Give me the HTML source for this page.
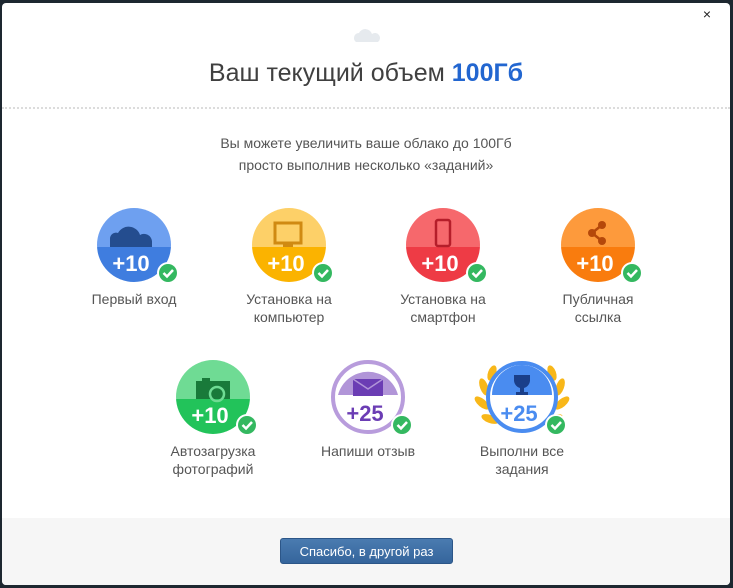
<!DOCTYPE html>
<html><head><meta charset="utf-8"><style>
body{margin:0;width:733px;height:588px;background:#1d2730;font-family:"Liberation Sans",sans-serif;position:relative;overflow:hidden}
.m{position:absolute;left:2px;top:3px;width:728px;height:582px;background:#fff;border-radius:4px;overflow:hidden}
.f{position:absolute;left:0;right:0;top:515px;bottom:0;background:#f6f6f6}
.btn{position:absolute;left:278px;top:535px;width:173px;height:26px;background:linear-gradient(#4a7bb0,#35659c);border:1px solid #2c5688;border-radius:3px;color:#fff;font-size:13px;text-align:center;line-height:26px;box-sizing:border-box}
h1{position:absolute;top:56px;left:0;right:0;text-align:center;margin:0;font-weight:normal;font-size:25px;color:#404040}
h1 b{color:#2266d0}
.dots{position:absolute;left:0;right:0;top:104px;border-top:2px dotted #dcdcdc}
.p{position:absolute;top:129px;left:0;right:0;text-align:center;font-size:14px;line-height:22px;color:#555}
.x{position:absolute;right:19px;top:3px;font-size:14px;color:#222}
.l{position:absolute;width:150px;text-align:center;font-size:14px;line-height:18px;color:#555}
svg{position:absolute;left:0;top:0}
</style></head><body>
<div class="m">
<div class="x">×</div>
<svg width="728" height="582">
<defs>
<clipPath id="c1"><circle cx="0" cy="0" r="37"/></clipPath>
<g id="chk"><circle r="11" fill="#fff"/><circle r="9" fill="#34b860"/><path d="M-4.5 0 L-1 3.5 L5 -3" stroke="#fff" stroke-width="2.5" fill="none"/></g>
</defs>
<path d="M354 39 a5 5 0 0 1 3-9 a7 7 0 0 1 13 1 a4.5 4.5 0 0 1 6 8z" fill="#e6eaee"/>
<g transform="translate(132,242)"><g clip-path="url(#c1)"><rect x="-40" y="-40" width="80" height="42" fill="#6ea0f0"/><rect x="-40" y="2" width="80" height="40" fill="#3f7ddf"/></g>
<path d="M-24 2 v-8 a6 6 0 0 1 8-6 a12 12 0 0 1 22 2 a8 8 0 0 1 12 6 v6z" fill="#244d8f"/>
<text x="-3" y="26" text-anchor="middle" fill="#fff" font-size="22" font-weight="bold">+10</text><use href="#chk" x="34" y="28"/></g>
<g transform="translate(287,242)"><g clip-path="url(#c1)"><rect x="-40" y="-40" width="80" height="42" fill="#fdd068"/><rect x="-40" y="2" width="80" height="40" fill="#fbb300"/></g>
<rect x="-14" y="-22" width="26" height="20" fill="none" stroke="#d08a12" stroke-width="3"/><rect x="-6" y="-1" width="10" height="3" fill="#d08a12"/>
<text x="-3" y="26" text-anchor="middle" fill="#fff" font-size="22" font-weight="bold">+10</text><use href="#chk" x="34" y="28"/></g>
<g transform="translate(441,242)"><g clip-path="url(#c1)"><rect x="-40" y="-40" width="80" height="42" fill="#f6686c"/><rect x="-40" y="2" width="80" height="40" fill="#ee3b45"/></g>
<rect x="-7" y="-25" width="14" height="26" rx="2" fill="none" stroke="#b51e2a" stroke-width="2.5"/>
<text x="-3" y="26" text-anchor="middle" fill="#fff" font-size="22" font-weight="bold">+10</text><use href="#chk" x="34" y="28"/></g>
<g transform="translate(596,242)"><g clip-path="url(#c1)"><rect x="-40" y="-40" width="80" height="42" fill="#fd9a3c"/><rect x="-40" y="2" width="80" height="40" fill="#f97c0e"/></g>
<path d="M4 -20 L-6 -12 L4 -4" stroke="#b5480a" stroke-width="2.5" fill="none"/><circle cx="4" cy="-20" r="4" fill="#b5480a"/><circle cx="-6" cy="-12" r="4" fill="#b5480a"/><circle cx="4" cy="-4" r="4" fill="#b5480a"/>
<text x="-3" y="26" text-anchor="middle" fill="#fff" font-size="22" font-weight="bold">+10</text><use href="#chk" x="34" y="28"/></g>
<g transform="translate(211,394)"><g clip-path="url(#c1)"><rect x="-40" y="-40" width="80" height="42" fill="#6fdb94"/><rect x="-40" y="2" width="80" height="40" fill="#22c35a"/></g>
<path d="M-17 -16 h6 v-3 h8 v3 h20 v18 h-34z" fill="#197a3a"/><circle cx="4" cy="-3" r="7" fill="none" stroke="#6fdb94" stroke-width="2.5"/>
<text x="-3" y="26" text-anchor="middle" fill="#fff" font-size="22" font-weight="bold">+10</text><use href="#chk" x="34" y="28"/></g>
<g transform="translate(366,394)"><circle r="35" fill="#fff" stroke="#b89cdc" stroke-width="4"/>
<path d="M-30 -2 A31 31 0 0 1 30 -2 Z" fill="#b195d8"/>
<rect x="-15" y="-18" width="30" height="17" fill="#6b3db4"/><path d="M-15 -18 L0 -8 L15 -18" stroke="#b195d8" stroke-width="1.5" fill="none"/>
<text x="-3" y="24" text-anchor="middle" fill="#6b3db4" font-size="22" font-weight="bold">+25</text><use href="#chk" x="34" y="28"/></g>
<g transform="translate(520,394)">
<g fill="#f8b719"><ellipse cx="-38" cy="-10" rx="4" ry="9" transform="rotate(-20 -38 -10)"/><ellipse cx="-40" cy="6" rx="4" ry="9" transform="rotate(-50 -40 6)"/><ellipse cx="-32" cy="22" rx="4" ry="9" transform="rotate(-70 -32 22)"/><ellipse cx="-30" cy="-24" rx="4" ry="8" transform="rotate(20 -30 -24)"/>
<ellipse cx="38" cy="-10" rx="4" ry="9" transform="rotate(20 38 -10)"/><ellipse cx="40" cy="6" rx="4" ry="9" transform="rotate(50 40 6)"/><ellipse cx="32" cy="22" rx="4" ry="9" transform="rotate(70 32 22)"/><ellipse cx="30" cy="-24" rx="4" ry="8" transform="rotate(-20 30 -24)"/></g>
<circle r="34" fill="#fff" stroke="#4a8cf0" stroke-width="4"/>
<path d="M-30 -2 A30 30 0 0 1 30 -2 Z" fill="#4a8cf0"/>
<path d="M-8 -22 h16 v5 a8 8 0 0 1 -6 8 v4 h4 v3 h-12 v-3 h4 v-4 a8 8 0 0 1 -6 -8z" fill="#1a3f8a"/>
<text x="-3" y="24" text-anchor="middle" fill="#4a8cf0" font-size="22" font-weight="bold">+25</text><use href="#chk" x="34" y="28"/></g>
</svg>
<h1>Ваш текущий объем <b>100Гб</b></h1>
<div class="dots"></div>
<div class="p">Вы можете увеличить ваше облако до 100Гб<br>просто выполнив несколько «заданий»</div>
<div class="l" style="left:57px;top:287px">Первый вход</div>
<div class="l" style="left:212px;top:287px">Установка на<br>компьютер</div>
<div class="l" style="left:366px;top:287px">Установка на<br>смартфон</div>
<div class="l" style="left:521px;top:287px">Публичная<br>ссылка</div>
<div class="l" style="left:136px;top:439px">Автозагрузка<br>фотографий</div>
<div class="l" style="left:291px;top:439px">Напиши отзыв</div>
<div class="l" style="left:445px;top:439px">Выполни все<br>задания</div>
<div class="f"></div>
<div class="btn">Спасибо, в другой раз</div>
</div>
</body></html>
